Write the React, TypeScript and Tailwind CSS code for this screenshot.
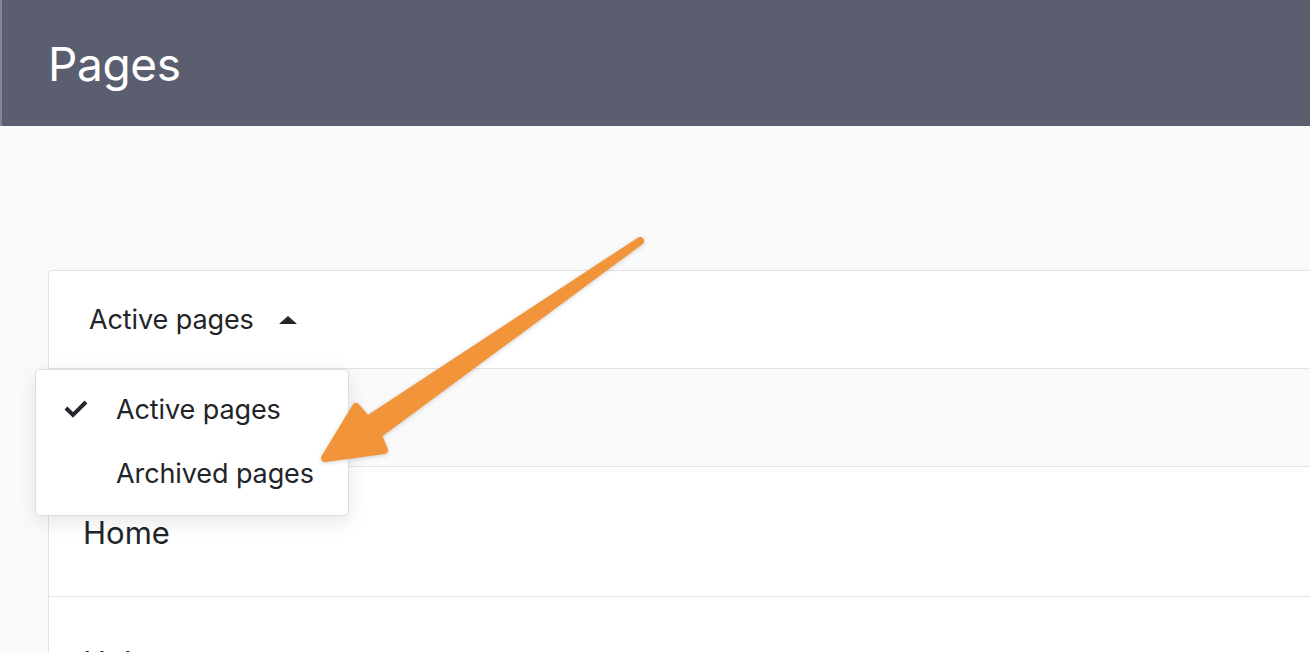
import React from "react";

export default function App() {
  return (
    <div
      className="relative w-[1310px] h-[652px] overflow-hidden bg-[#fafafa]"
      style={{ fontFamily: "Inter, 'Noto Sans', sans-serif" }}
    >
      <header className="h-[126px] bg-[#5a5e6e] border-l-2 border-[#83868f] flex items-center pl-[46px]">
        <h1 className="text-[46px] leading-none text-white font-normal tracking-[-0.4px] pt-[1px]">Pages</h1>
      </header>

      <main className="pl-12 pt-[144px]">
        <div className="relative w-[1300px] bg-white border-l border-t border-[#e2e2e2] rounded-tl-[5px]">
          <div className="h-[98px] flex items-center pl-10 border-b border-[#e4e4e4] text-[#212529]">
            <span className="text-[27px] leading-none tracking-[-0.1px] pr-[1px]">Active pages</span>
            <svg width="18" height="8" viewBox="0 0 18 8" className="ml-6 mt-[1px]">
              <polygon points="9,0 18,8 0,8" fill="#23262d" />
            </svg>
          </div>
          <div className="h-[98px] bg-[#fafafa] border-b border-[#e4e4e4]" />
          <div className="h-[130px] flex items-start pl-[34px] pt-[50px] border-b border-[#e4e4e4]">
            <span className="text-[31px] leading-none text-[#212529]">Home</span>
          </div>
          <div className="h-[130px] flex items-start pl-[34px] pt-[50px]">
            <span className="text-[31px] leading-none text-[#212529]">Help</span>
          </div>

          <div className="absolute left-[-14px] top-[98px] w-[314px] bg-white border border-[#dedede] rounded-[5px] shadow-[0_6px_20px_rgba(0,0,0,0.10)] pt-[7px] pb-[10px] text-[#212529]">
            <div className="h-[64px] flex items-center">
              <div className="w-[80px] flex justify-start pl-[28px]">
                <svg width="24" height="18" viewBox="0 0 24 18">
                  <polyline points="2,8 9,15 22,2" fill="none" stroke="#23262d" strokeWidth="4" strokeLinejoin="miter" />
                </svg>
              </div>
              <span className="text-[27px] leading-none tracking-[-0.1px]">Active pages</span>
            </div>
            <div className="h-[64px] flex items-center">
              <div className="w-[80px]" />
              <span className="text-[27px] leading-none tracking-[-0.1px]">Archived pages</span>
            </div>
          </div>
        </div>
      </main>

      <svg
        className="absolute left-0 top-0 pointer-events-none drop-shadow-[0_1px_2px_rgba(0,0,0,0.18)]"
        width="1310"
        height="652"
        viewBox="0 0 1310 652"
      >
        <polygon
          points="640,241 377.6,434.8 384,450 325,458 356,407 367.4,420.2"
          fill="#f2953a"
          stroke="#f2953a"
          strokeWidth="8"
          strokeLinejoin="round"
        />
      </svg>
    </div>
  );
}
